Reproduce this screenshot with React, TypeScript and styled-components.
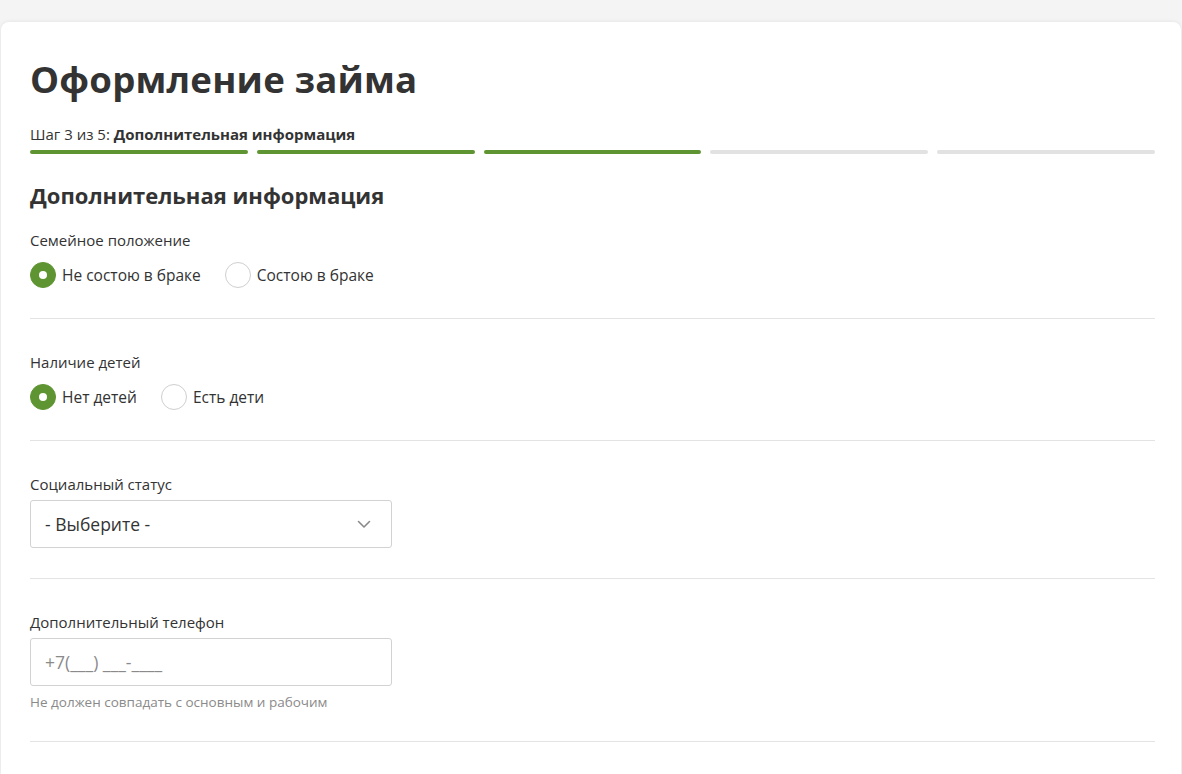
import React from "react";
import styled, { createGlobalStyle } from "styled-components";

const Global = createGlobalStyle`
  html, body { margin: 0; padding: 0; background: #f4f4f4; }
  body { font-family: "Open Sans", "Liberation Sans", sans-serif; color: #333; }
  * { box-sizing: border-box; }
`;

const Page = styled.div`
  padding: 22px 1px 0 1px;
  min-height: 774px;
`;

const Card = styled.main`
  background: #fff;
  border-radius: 8px 8px 0 0;
  box-shadow: 0 0 4px rgba(0, 0, 0, 0.08);
  padding: 31px 26px 0 29px;
  min-height: 752px;
`;

const Title = styled.h1`
  margin: 0;
  font-family: "Open Sans", "Liberation Sans", sans-serif;
  font-weight: 700;
  font-size: 36.6px;
  line-height: 52px;
  color: #333;
  letter-spacing: 0.2px;
`;

const StepText = styled.div`
  margin-top: 19px;
  font-size: 15px;
  line-height: 20px;
  color: #333;
  b { font-weight: 700; }
`;

const Progress = styled.div`
  display: grid;
  grid-template-columns: repeat(5, 1fr);
  gap: 9px;
  margin-top: 6px;
`;

const Segment = styled.div<{ $done: boolean }>`
  height: 4px;
  border-radius: 2px;
  background: ${(p) => (p.$done ? "#5e9431" : "#e2e2e2")};
`;

const SectionTitle = styled.h2`
  margin: 26px 0 0 0;
  font-weight: 700;
  font-size: 22px;
  line-height: 30px;
  color: #333;
`;

const Field = styled.section<{ $first?: boolean }>`
  padding: ${(p) => (p.$first ? "20px" : "33px")} 0 30px 0;
  border-bottom: 1px solid #e3e3e3;
`;

const Label = styled.div`
  font-size: 15px;
  line-height: 20px;
  color: #333;
`;

const RadioRow = styled.div`
  display: flex;
  align-items: center;
  gap: 24px;
  margin-top: 12px;
`;

const RadioItem = styled.label`
  display: flex;
  align-items: center;
  gap: 6px;
  font-size: 15.5px;
  line-height: 26px;
  color: #333;
  cursor: pointer;
`;

const RadioCircle = styled.span<{ $checked: boolean }>`
  width: 26px;
  height: 26px;
  border-radius: 50%;
  flex: none;
  display: flex;
  align-items: center;
  justify-content: center;
  background: ${(p) => (p.$checked ? "#5e9431" : "#fff")};
  border: 1px solid ${(p) => (p.$checked ? "#5e9431" : "#cfcfcf")};
  &::after {
    content: "";
    width: 8px;
    height: 8px;
    border-radius: 50%;
    background: #fff;
    display: ${(p) => (p.$checked ? "block" : "none")};
  }
`;

const Box = styled.div`
  width: 362px;
  height: 48px;
  margin-top: 6px;
  border: 1px solid #d2d2d2;
  border-radius: 3px;
  display: flex;
  align-items: center;
  justify-content: space-between;
  padding: 0 20px 0 14px;
  font-size: 17.5px;
`;

const SelectValue = styled.span`
  color: #333;
`;

const Placeholder = styled.span`
  color: #8a8a8a;
`;

const Hint = styled.div`
  margin-top: 7px;
  font-size: 13.5px;
  line-height: 18px;
  color: #8a8a8a;
`;

const Radio = ({ checked, children }: { checked: boolean; children: React.ReactNode }) => (
  <RadioItem>
    <RadioCircle $checked={checked} />
    {children}
  </RadioItem>
);

const Chevron = () => (
  <svg width="14" height="9" viewBox="0 0 14 9" fill="none">
    <path d="M1.5 1.5 L7 7 L12.5 1.5" stroke="#8a8a8a" strokeWidth="1.6" strokeLinecap="round" strokeLinejoin="round" />
  </svg>
);

export default function App() {
  return (
    <>
      <Global />
      <Page>
        <Card>
          <Title>Оформление займа</Title>
          <StepText>
            Шаг 3 из 5: <b>Дополнительная информация</b>
          </StepText>
          <Progress>
            {[0, 1, 2, 3, 4].map((i) => (
              <Segment key={i} $done={i < 3} />
            ))}
          </Progress>
          <SectionTitle>Дополнительная информация</SectionTitle>
          <Field $first>
            <Label>Семейное положение</Label>
            <RadioRow>
              <Radio checked>Не состою в браке</Radio>
              <Radio checked={false}>Состою в браке</Radio>
            </RadioRow>
          </Field>
          <Field>
            <Label>Наличие детей</Label>
            <RadioRow>
              <Radio checked>Нет детей</Radio>
              <Radio checked={false}>Есть дети</Radio>
            </RadioRow>
          </Field>
          <Field>
            <Label>Социальный статус</Label>
            <Box>
              <SelectValue>- Выберите -</SelectValue>
              <Chevron />
            </Box>
          </Field>
          <Field>
            <Label>Дополнительный телефон</Label>
            <Box>
              <Placeholder>+7(___) ___-____</Placeholder>
            </Box>
            <Hint>Не должен совпадать с основным и рабочим</Hint>
          </Field>
        </Card>
      </Page>
    </>
  );
}
